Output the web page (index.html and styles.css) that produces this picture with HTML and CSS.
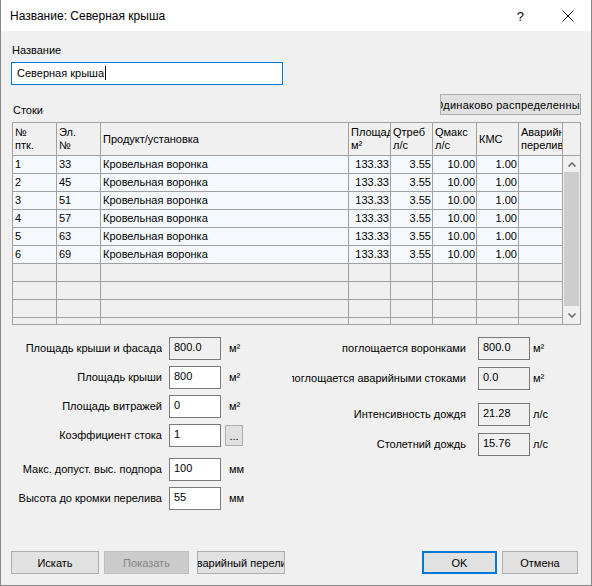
FILE: index.html
```html
<!DOCTYPE html>
<html lang="ru">
<head>
    <meta charset="UTF-8">
    <title>Название: Северная крыша</title>
    <link rel="stylesheet" href="styles.css">
</head>
<body>
    <div class="window">
        <div class="titlebar">
            <span class="title">Название: Северная крыша</span>
            <span class="help">?</span>
            <svg class="close" width="12" height="12" viewBox="0 0 12 12">
                <path d="M0.5 0.5 L11.5 11.5 M11.5 0.5 L0.5 11.5" stroke="#000" stroke-width="1" fill="none"/>
            </svg>
        </div>

        <div class="content">
            <div class="field-label">Название</div>
            <div class="name-input"><span>Северная крыша</span><span class="caret"></span></div>

            <div class="grid-caption">
                <span class="caption">Стоки</span>
                <button class="btn btn-spread"><span>Одинаково распределенные</span></button>
            </div>

            <!-- таблица стоков -->
            <div class="grid">
                <div class="grid-head">
                    <div class="hcell">№<br>птк.</div>
                    <div class="hcell">Эл.<br>№</div>
                    <div class="hcell">Продукт/установка</div>
                    <div class="hcell">Площадь<br>м²</div>
                    <div class="hcell">Qтреб<br>л/с</div>
                    <div class="hcell">Qмакс<br>л/с</div>
                    <div class="hcell">КМС</div>
                    <div class="hcell">Аварийный<br>перелив</div>
                    <div class="hcell hcell-end"></div>
                </div>
                <div class="grid-body">
                    <div class="rows">
                        <div class="row filled"><div class="cell">1</div><div class="cell">33</div><div class="cell">Кровельная воронка</div><div class="cell num">133.33</div><div class="cell num">3.55</div><div class="cell num">10.00</div><div class="cell num">1.00</div><div class="cell"></div></div>
                        <div class="row filled"><div class="cell">2</div><div class="cell">45</div><div class="cell">Кровельная воронка</div><div class="cell num">133.33</div><div class="cell num">3.55</div><div class="cell num">10.00</div><div class="cell num">1.00</div><div class="cell"></div></div>
                        <div class="row filled"><div class="cell">3</div><div class="cell">51</div><div class="cell">Кровельная воронка</div><div class="cell num">133.33</div><div class="cell num">3.55</div><div class="cell num">10.00</div><div class="cell num">1.00</div><div class="cell"></div></div>
                        <div class="row filled"><div class="cell">4</div><div class="cell">57</div><div class="cell">Кровельная воронка</div><div class="cell num">133.33</div><div class="cell num">3.55</div><div class="cell num">10.00</div><div class="cell num">1.00</div><div class="cell"></div></div>
                        <div class="row filled"><div class="cell">5</div><div class="cell">63</div><div class="cell">Кровельная воронка</div><div class="cell num">133.33</div><div class="cell num">3.55</div><div class="cell num">10.00</div><div class="cell num">1.00</div><div class="cell"></div></div>
                        <div class="row filled"><div class="cell">6</div><div class="cell">69</div><div class="cell">Кровельная воронка</div><div class="cell num">133.33</div><div class="cell num">3.55</div><div class="cell num">10.00</div><div class="cell num">1.00</div><div class="cell"></div></div>
                        <div class="row"><div class="cell"></div><div class="cell"></div><div class="cell"></div><div class="cell"></div><div class="cell"></div><div class="cell"></div><div class="cell"></div><div class="cell"></div></div>
                        <div class="row"><div class="cell"></div><div class="cell"></div><div class="cell"></div><div class="cell"></div><div class="cell"></div><div class="cell"></div><div class="cell"></div><div class="cell"></div></div>
                        <div class="row"><div class="cell"></div><div class="cell"></div><div class="cell"></div><div class="cell"></div><div class="cell"></div><div class="cell"></div><div class="cell"></div><div class="cell"></div></div>
                        <div class="row"><div class="cell"></div><div class="cell"></div><div class="cell"></div><div class="cell"></div><div class="cell"></div><div class="cell"></div><div class="cell"></div><div class="cell"></div></div>
                    </div>
                    <div class="scrollbar">
                        <div class="sb-btn sb-up">
                            <svg width="8" height="5" viewBox="0 0 8 5"><path d="M0.5 4.5 L4 1 L7.5 4.5" stroke="#606060" stroke-width="1.4" fill="none"/></svg>
                        </div>
                        <div class="sb-thumb"></div>
                        <div class="sb-btn sb-down">
                            <svg width="8" height="5" viewBox="0 0 8 5"><path d="M0.5 0.5 L4 4 L7.5 0.5" stroke="#606060" stroke-width="1.4" fill="none"/></svg>
                        </div>
                    </div>
                </div>
            </div>

            <div class="params">
                <div class="params-left">
                    <div class="param">
                        <div class="plabel">Площадь крыши и фасада</div>
                        <div class="box readonly">800.0</div>
                        <div class="unit">м²</div>
                    </div>
                    <div class="param">
                        <div class="plabel">Площадь крыши</div>
                        <div class="box">800</div>
                        <div class="unit">м²</div>
                    </div>
                    <div class="param">
                        <div class="plabel">Площадь витражей</div>
                        <div class="box">0</div>
                        <div class="unit">м²</div>
                    </div>
                    <div class="param">
                        <div class="plabel">Коэффициент стока</div>
                        <div class="box">1</div>
                        <button class="btn btn-dots">...</button>
                    </div>
                    <div class="param param-gap">
                        <div class="plabel">Макс. допуст. выс. подпора</div>
                        <div class="box">100</div>
                        <div class="unit">мм</div>
                    </div>
                    <div class="param param-last">
                        <div class="plabel">Высота до кромки перелива</div>
                        <div class="box">55</div>
                        <div class="unit">мм</div>
                    </div>
                </div>

                <div class="params-right">
                    <div class="param">
                        <div class="plabel"><span>поглощается воронками</span></div>
                        <div class="box readonly">800.0</div>
                        <div class="unit">м²</div>
                    </div>
                    <div class="param">
                        <div class="plabel"><span>Площадь поглощается аварийными стоками</span></div>
                        <div class="box readonly">0.0</div>
                        <div class="unit">м²</div>
                    </div>
                    <div class="param param-gap">
                        <div class="plabel"><span>Интенсивность дождя</span></div>
                        <div class="box readonly">21.28</div>
                        <div class="unit">л/с</div>
                    </div>
                    <div class="param param-last">
                        <div class="plabel"><span>Столетний дождь</span></div>
                        <div class="box readonly">15.76</div>
                        <div class="unit">л/с</div>
                    </div>
                </div>
            </div>

            <div class="footer">
                <button class="btn btn-search">Искать</button>
                <button class="btn btn-show" disabled>Показать</button>
                <button class="btn btn-overflow"><span>Аварийный перелив</span></button>
                <button class="btn btn-ok">OK</button>
                <button class="btn btn-cancel">Отмена</button>
            </div>
        </div>
    </div>
</body>
</html>
```

FILE: styles.css
```css
* {
    box-sizing: border-box;
}

body {
    margin: 0;
    font-family: 'Liberation Sans', Arial, sans-serif;
    font-size: 11px;
    color: #000;
    background: #f0f0f0;
}

.window {
    width: 592px;
    height: 586px;
    background: #f0f0f0;
    border-left: 1px solid #888;
    border-right: 1px solid #888;
    border-bottom: 1px solid #888;
    overflow: hidden;
}

/* заголовок окна */
.titlebar {
    height: 31px;
    background: #fff;
    display: flex;
    align-items: center;
    padding: 1px 0 0 9px;
}

.title {
    font-size: 12px;
    flex: 1;
}

.help {
    font-size: 13px;
    margin-right: 38px;
}

.close {
    margin-right: 17px;
}

.content {
    padding: 13px 0 0 10px;
}

.field-label {
    line-height: 13px;
    padding-left: 1px;
}

.name-input {
    width: 272px;
    height: 23px;
    margin-top: 5px;
    background: #fff;
    border: 1px solid #0078d7;
    display: flex;
    align-items: center;
    padding: 0 0 1px 5px;
}

.caret {
    width: 1px;
    height: 14px;
    background: #000;
    margin-left: 1px;
}

.grid-caption {
    width: 570px;
    margin-top: 9px;
    display: flex;
    justify-content: space-between;
    align-items: flex-start;
}

.caption {
    margin-top: 10px;
    padding-left: 2px;
    line-height: 13px;
}

.btn {
    font-family: inherit;
    font-size: 11px;
    color: #000;
    background: #e1e1e1;
    border: 1px solid #adadad;
    padding: 0;
    height: 23px;
    display: flex;
    align-items: center;
    justify-content: center;
    overflow: hidden;
    white-space: nowrap;
}

.btn span {
    flex-shrink: 0;
}

.btn-spread {
    width: 141px;
    height: 21px;
    letter-spacing: 0.25px;
}

/* сетка */
.grid {
    margin: 5px 0 0 1px;
    width: 569px;
    height: 203px;
    border: 1px solid #a0a0a0;
    overflow: hidden;
}

.grid-head,
.row {
    display: grid;
    grid-template-columns: 44px 44px 248px 42px 42px 44px 42px 44px;
}

.grid-head {
    grid-template-columns: 44px 44px 248px 42px 42px 44px 42px 44px 17px;
    height: 33px;
    border-bottom: 1px solid #a0a0a0;
}

.hcell {
    border-right: 1px solid #a0a0a0;
    display: flex;
    align-items: center;
    padding: 0 2px;
    line-height: 13px;
    white-space: nowrap;
    overflow: hidden;
}

.hcell-end {
    border-right: none;
}

.grid-body {
    display: flex;
    height: 168px;
}

.rows {
    width: 550px;
    overflow: hidden;
}

.row {
    height: 18px;
    border-bottom: 1px solid #a0a0a0;
}

.row.filled {
    background: #f5f9fe;
}

.cell {
    border-right: 1px solid #a0a0a0;
    line-height: 17px;
    padding: 0 2px;
    white-space: nowrap;
    overflow: hidden;
}

.cell.num {
    text-align: right;
    padding-right: 1px;
}

.scrollbar {
    width: 17px;
    display: flex;
    flex-direction: column;
    background: #f0f0f0;
}

.sb-btn {
    display: flex;
    align-items: center;
    justify-content: center;
}

.sb-up {
    height: 16px;
}

.sb-thumb {
    height: 134px;
    margin-left: 1px;
    width: 15px;
    background: #cdcdcd;
}

.sb-down {
    height: 18px;
}

/* параметры под таблицей */
.params {
    display: flex;
    margin-top: 12px;
}

.params-left,
.params-right {
    display: flex;
    flex-direction: column;
}

.params-left {
    width: 278px;
}

.param {
    display: flex;
    align-items: center;
    height: 23px;
    margin-bottom: 6px;
}

.params-right .param {
    margin-bottom: 7px;
}

.params-left .param-gap {
    margin-top: 5px;
}

.params-right .param-gap {
    margin-top: 6px;
}

.param-last {
    margin-bottom: 0;
}

.plabel {
    line-height: 13px;
    white-space: nowrap;
    overflow: hidden;
    display: flex;
    justify-content: flex-end;
}

.params-left .plabel {
    width: 151px;
}

.params-right .plabel {
    margin-left: 3px;
    width: 174px;
}

.plabel span {
    flex-shrink: 0;
}

.box {
    width: 52px;
    height: 23px;
    background: #fff;
    border: 1px solid #7a7a7a;
    padding: 3px 0 0 4px;
    line-height: 13px;
}

.params-left .box {
    margin-left: 7px;
}

.params-right .box {
    margin-left: 12px;
}

.box.readonly {
    background: #f0f0f0;
}

.unit {
    line-height: 13px;
}

.params-left .unit {
    margin-left: 8px;
}

.params-right .unit {
    margin-left: 3px;
}

.btn-dots {
    width: 18px;
    height: 21px;
    margin-left: 4px;
    align-items: flex-end;
    padding-bottom: 3px;
}

.footer {
    display: flex;
    margin-top: 41px;
}

.btn-search {
    width: 88px;
}

.btn-show {
    width: 85px;
    margin-left: 5px;
    background: #cccccc;
    border-color: #bfbfbf;
    color: #838383;
}

.btn-overflow {
    width: 88px;
    margin-left: 8px;
}

.btn-ok {
    width: 75px;
    margin-left: 137px;
    border: 2px solid #0078d7;
}

.btn-cancel {
    width: 76px;
    margin-left: 5px;
}
```
